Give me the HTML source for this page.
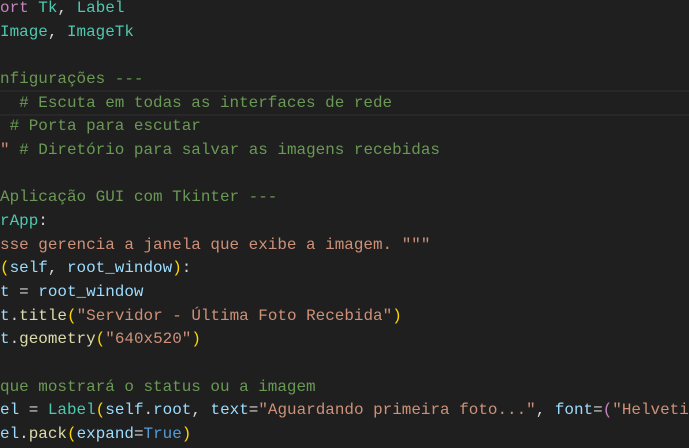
<!DOCTYPE html><html><head><meta charset="utf-8"><style>
body{margin:0;background:#1f1f1f;width:689px;height:448px;overflow:hidden;position:relative}
.c{position:absolute;left:0;top:-3px;width:689px;overflow:hidden;font-family:"Liberation Mono",monospace;font-size:15.95px;line-height:23.65px;white-space:pre;color:#d4d4d4}
.hl{position:absolute;left:0;right:0;top:90px;height:22px;border-top:2px solid #282828;border-bottom:2px solid #282828}
.k{color:#c586c0}.t{color:#4ec9b0}.g{color:#6a9955}.s{color:#ce9178}.v{color:#9cdcfe}.f{color:#dcdcaa}.y{color:#ffd700}.b{color:#569cd6}
</style></head><body><div class="hl"></div><div class="c"><span class="k">ort</span> <span class="t">Tk</span>, <span class="t">Label</span>
<span class="t">Image</span>, <span class="t">ImageTk</span>

<span class="g">nfigurações ---</span>
<span class="g">  # Escuta em todas as interfaces de rede</span>
<span class="g"> # Porta para escutar</span>
<span class="s">"</span> <span class="g"># Diretório para salvar as imagens recebidas</span>

<span class="g">Aplicação GUI com Tkinter ---</span>
<span class="t">rApp</span>:
<span class="s">sse gerencia a janela que exibe a imagem. """</span>
<span class="y">(</span><span class="v">self</span>, <span class="v">root_window</span><span class="y">)</span>:
<span class="v">t</span> = <span class="v">root_window</span>
<span class="v">t</span>.<span class="f">title</span><span class="y">(</span><span class="s">"Servidor - Última Foto Recebida"</span><span class="y">)</span>
<span class="v">t</span>.<span class="f">geometry</span><span class="y">(</span><span class="s">"640x520"</span><span class="y">)</span>

<span class="g">que mostrará o status ou a imagem</span>
<span class="v">el</span> = <span class="t">Label</span><span class="y">(</span><span class="v">self</span>.<span class="v">root</span>, <span class="v">text</span>=<span class="s">"Aguardando primeira foto..."</span>, <span class="v">font</span>=<span class="k">(</span><span class="s">"Helveti</span>
<span class="v">el</span>.<span class="f">pack</span><span class="y">(</span><span class="v">expand</span>=<span class="b">True</span><span class="y">)</span></div></body></html>
